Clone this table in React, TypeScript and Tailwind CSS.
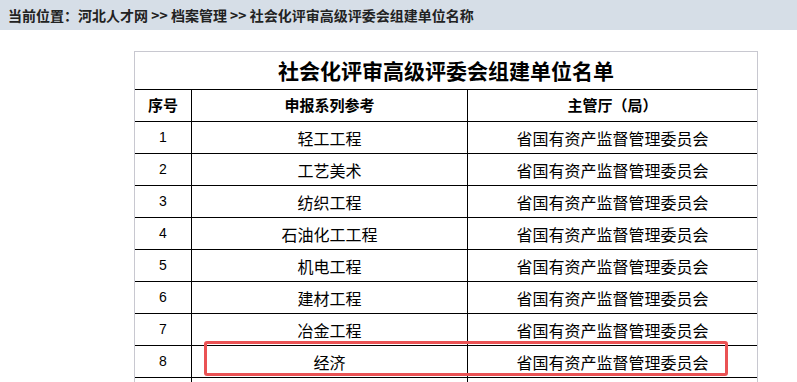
import React from 'react'

const rows = [
  { no: 1, name: '轻工工程' },
  { no: 2, name: '工艺美术' },
  { no: 3, name: '纺织工程' },
  { no: 4, name: '石油化工工程' },
  { no: 5, name: '机电工程' },
  { no: 6, name: '建材工程' },
  { no: 7, name: '冶金工程' },
  { no: 8, name: '经济' },
  { no: 9, name: '' },
]

export default function App() {
  return (
    <div className="relative w-[797px] h-[382px] overflow-hidden bg-white font-['Noto_Sans_CJK_SC',sans-serif] text-black">
      {/* Breadcrumb */}
      <div className="h-[30px] bg-[#d6dee7] flex items-center pl-[8px] text-[14px] font-bold text-[#222]">
        当前位置：河北人才网 &gt;&gt; 档案管理 &gt;&gt; 社会化评审高级评委会组建单位名称
      </div>

      <div className="pt-[21px] pl-[134px]">
        <div className="w-[624px] border border-[#c8c8d0] border-b-0">
          <div className="h-[37px] flex items-center justify-center text-[21px] font-bold leading-none">
            社会化评审高级评委会组建单位名单
          </div>
          <div className="grid grid-cols-[57px_276px_1fr] border-t border-black text-[15px]">
            <div className="h-[32px] flex items-center justify-center font-bold border-r border-b border-black">序号</div>
            <div className="h-[32px] flex items-center justify-center font-bold border-r border-b border-black">申报系列参考</div>
            <div className="h-[32px] flex items-center justify-center font-bold border-b border-black">主管厅（局）</div>
            {rows.map(({ no, name }) => (
              <React.Fragment key={no}>
                <div className="h-[32px] flex items-center justify-center font-['Liberation_Sans',sans-serif] text-[14px] border-r border-b border-black">{no === 9 ? '' : no}</div>
                <div className="h-[32px] flex items-center justify-center text-[16px] border-r border-b border-black">{name}</div>
                <div className="h-[32px] flex items-center justify-center text-[16px] border-b border-black">{no === 9 ? '' : '省国有资产监督管理委员会'}</div>
              </React.Fragment>
            ))}
          </div>
        </div>
      </div>

      {/* Highlight box */}
      <div className="absolute left-[204px] top-[341px] w-[524px] h-[35px] border-[3px] border-[#ea5254] rounded-[3px]" />
    </div>
  )
}
